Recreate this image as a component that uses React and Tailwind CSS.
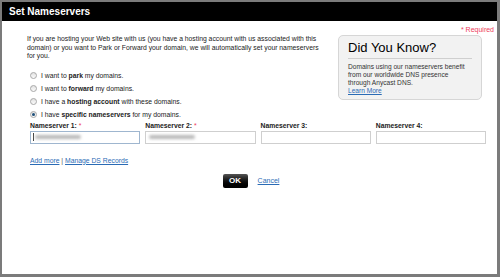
import React from "react";

const options = [
  { pre: "I want to ", bold: "park", post: " my domains." },
  { pre: "I want to ", bold: "forward", post: " my domains." },
  { pre: "I have a ", bold: "hosting account", post: " with these domains." },
  { pre: "I have ", bold: "specific nameservers", post: " for my domains.", checked: true },
];

const servers = [
  { label: "Nameserver 1:", required: true, filled: true, focus: true },
  { label: "Nameserver 2:", required: true, filled: true },
  { label: "Nameserver 3:" },
  { label: "Nameserver 4:" },
];

function Radio({ checked }) {
  return (
    <span className="w-[7px] h-[7px] rounded-full border border-[#a8a8a8] bg-gradient-to-b from-[#e2e2e2] to-[#fbfbfb] flex items-center justify-center shrink-0">
      {checked && <span className="w-[3px] h-[3px] rounded-full bg-[#1d4f7a]"></span>}
    </span>
  );
}

export default function App() {
  return (
    <div
      className="w-[500px] h-[277px] bg-[#7b7b7b] pt-[2px] pl-[2px] pr-[3px] pb-[3px] overflow-hidden"
      style={{ fontFamily: '"Liberation Sans", Arial, sans-serif' }}
    >
      <div className="h-full bg-white flex flex-col">
        {/* ===== HEADER ===== */}
        <div className="h-[19px] bg-black flex items-center px-[7px]">
          <span className="text-white text-[10px] font-bold">Set Nameservers</span>
        </div>

        <div className="flex justify-end pr-[3px] pt-[4px]">
          <span className="text-[#ee3d5c] text-[7px] leading-[9px]">* Required</span>
        </div>

        {/* ===== BODY ===== */}
        <div className="flex pl-[25px] pr-[15px]">
          <div className="flex-1">
            <p className="text-[6.8px] leading-[8.5px] text-[#222] w-[300px] mt-[1px]">
              If you are hosting your Web site with us (you have a hosting account with us associated with this
              domain) or you want to Park or Forward your domain, we will automatically set your nameservers
              for you.
            </p>
            <div className="flex flex-col gap-[5px] mt-[11px] pl-[3px]">
              {options.map((o) => (
                <label key={o.bold} className="flex items-center gap-[4px] text-[6.8px] leading-[8px] text-[#222]">
                  <Radio checked={o.checked} />
                  <span>
                    {o.pre}
                    <b>{o.bold}</b>
                    {o.post}
                  </span>
                </label>
              ))}
            </div>
          </div>

          {/* ===== DID YOU KNOW ===== */}
          <div className="w-[144px] h-[65px] mt-[1px] rounded-[5px] border border-[#d6d6d6] bg-[#f2f2f2] px-[9px] pt-[5px]">
            <div className="text-[13px] leading-[14px] text-black pb-[3px] border-b border-[#cfcfcf]">Did You Know?</div>
            <p className="text-[6.6px] leading-[8px] text-[#333] mt-[4px]">
              Domains using our nameservers benefit from our worldwide DNS presence through Anycast DNS.
            </p>
            <span className="block text-[6.6px] leading-[8px] text-[#2a6bb5] underline">Learn More</span>
          </div>
        </div>

        {/* ===== NAMESERVERS ===== */}
        <div className="grid grid-cols-4 gap-x-[5px] pl-[28px] pr-[11px] mt-[2px]">
          {servers.map((s) => (
            <div key={s.label} className="flex flex-col">
              <span className="text-[6.8px] leading-[9px] font-bold text-[#222]">
                {s.label}
                {s.required && <span className="text-[#ee3d5c] font-normal"> *</span>}
              </span>
              <div
                className={`h-[13px] w-full border bg-white flex items-center px-[2px] mt-[1px] ${
                  s.focus ? "border-[#9fb6cf]" : "border-[#cfcfcf]"
                }`}
              >
                {s.focus && <span className="w-px h-[8px] bg-[#444]"></span>}
                {s.filled && <span className="h-[4px] w-[46px] bg-[#b8b8b8] rounded-full blur-[1.5px] ml-[1px]"></span>}
              </div>
            </div>
          ))}
        </div>

        <div className="pl-[28px] mt-[12px] text-[6.8px] leading-[9px] text-[#2a6bb5]">
          <span className="underline">Add more</span>
          <span className="text-[#555]"> | </span>
          <span className="underline">Manage DS Records</span>
        </div>

        {/* ===== ACTIONS ===== */}
        <div className="flex items-center justify-center gap-[10px] mt-[9px] pl-[3px]">
          <span className="w-[25px] h-[14px] rounded-[2px] bg-gradient-to-b from-[#555] via-[#111] to-[#000] text-white text-[8px] font-bold flex items-center justify-center">
            OK
          </span>
          <span className="text-[7px] text-[#2a6bb5] underline mt-[1px]">Cancel</span>
        </div>
      </div>
    </div>
  );
}
